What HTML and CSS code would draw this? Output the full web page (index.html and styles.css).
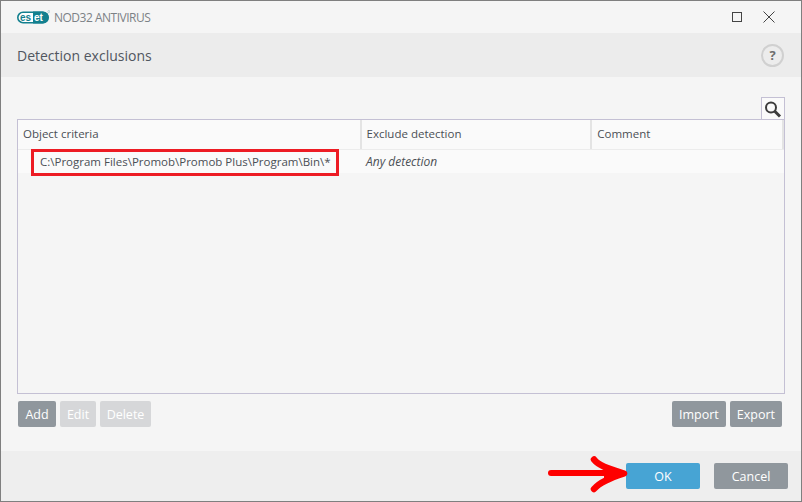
FILE: index.html
```html
<!DOCTYPE html>
<html lang="en">
<head>
<meta charset="utf-8">
<title>Detection exclusions</title>
<link rel="stylesheet" href="styles.css">
</head>
<body>
<div class="window">
  <div class="titlebar">
    <div class="brand">
      <svg class="logo" width="33" height="14" viewBox="0 0 33 14">
        <rect x="0.800" y="2.300" width="30" height="10.400" rx="5.200" fill="#fff" stroke="#13808f" stroke-width="1.600"/>
        <path d="M16 1.500h10a6 6 0 0 1 0 12H16z" fill="#13808f"/>
        <text x="3" y="10.700" class="logo-text logo-dark">es</text>
        <text x="17" y="10.700" class="logo-text logo-light">et</text>
        <circle cx="31.800" cy="1.500" r="1" fill="none" stroke="#7fb5bd" stroke-width=".5"/>
      </svg>
      <span class="product">NOD32 ANTIVIRUS</span>
    </div>
    <div class="winctl">
      <svg width="12" height="12" viewBox="0 0 12 12"><rect x="1.500" y="1.500" width="9" height="9" fill="none" stroke="#444"/></svg>
      <svg width="12" height="12" viewBox="0 0 12 12"><path d="M.5.500l11 11M11.500.500l-11 11" fill="none" stroke="#444"/></svg>
    </div>
  </div>
  <div class="header">
    <h1>Detection exclusions</h1>
    <span class="help">?</span>
  </div>
  <div class="content">
    <div class="search-row">
      <div class="search-tab">
        <svg width="18" height="18" viewBox="0 0 18 18"><circle cx="7" cy="7.500" r="5" fill="none" stroke="#3c3c3c" stroke-width="2"/><path d="M10.500 11l5.500 5.500" stroke="#3c3c3c" stroke-width="3" fill="none"/></svg>
      </div>
    </div>
    <div class="table">
      <div class="thead">
        <div class="th col1">Object criteria</div>
        <div class="th col2">Exclude detection</div>
        <div class="th col3">Comment</div>
      </div>
      <div class="row">
        <div class="td col1"><span class="path">C:\Program Files\Promob\Promob Plus\Program\Bin\*</span></div>
        <div class="td col2 italic">Any detection</div>
      </div>
    </div>
    <div class="actions">
      <div class="group">
        <button class="btn add">Add</button>
        <button class="btn off edit">Edit</button>
        <button class="btn off delete">Delete</button>
      </div>
      <div class="group">
        <button class="btn">Import</button>
        <button class="btn">Export</button>
      </div>
    </div>
  </div>
  <div class="footer">
    <svg class="arrow" width="84" height="38" viewBox="0 0 84 38"><path d="M7 18H66" fill="none" stroke="#fe0000" stroke-width="6" stroke-linecap="round"/><path d="M50 4.500C55 11 66 14 80 18.500C66 23 56 27 50 34" fill="none" stroke="#fe0000" stroke-width="6.500" stroke-linecap="round" stroke-linejoin="round"/><path d="M60 11L83 18.500L60 28z" fill="#fe0000"/></svg>
    <button class="btn wide ok">OK</button>
    <button class="btn wide">Cancel</button>
  </div>
</div>
</body>
</html>
```
FILE: styles.css
```css
* , *::before, *::after { box-sizing: border-box; }
html, body { margin: 0; padding: 0; }
body { width: 802px; height: 502px; overflow: hidden; font-family: "Open Sans", "Noto Sans", sans-serif; font-size: 11.500px; color: #4a4f55; }
.window { width: 802px; height: 502px; border: 1px solid #7f7f7f; display: flex; flex-direction: column; background: #f5f5f5; }
.titlebar { height: 32px; flex: none; display: flex; align-items: center; justify-content: space-between; padding: 0 26px 0 16px; }
.brand { display: flex; align-items: center; gap: 4px; }
.logo { display: block; }
.logo-text { font-family: "Liberation Sans", sans-serif; font-size: 10px; font-weight: 700; }
.logo-dark { fill: #13808f; }
.logo-light { fill: #fff; }
.product { font-size: 12px; color: #7c8186; letter-spacing: -.5px; }
.winctl { display: flex; gap: 20px; }
.winctl svg { display: block; }
.header { height: 44px; flex: none; background: #ececec; display: flex; align-items: center; justify-content: space-between; padding: 0 17px 0 16px; }
h1 { margin: 0; font-size: 14px; font-weight: 400; color: #505660; }
.help { width: 23px; height: 23px; border: 2px solid #d0d0d0; border-radius: 50%; display: flex; align-items: center; justify-content: center; font-size: 13px; font-weight: 700; color: #6e6e6e; }
.content { flex: 1; display: flex; flex-direction: column; padding: 20px 16px 0; }
.search-row { display: flex; justify-content: flex-end; height: 22px; flex: none; }
.search-tab { width: 24px; height: 22px; background: #fafafa; border: 1px solid #c4c0d4; border-bottom: 0; display: flex; align-items: center; justify-content: center; }
.table { height: 275px; flex: none; border: 1px solid #c4c0d4; }
.thead { height: 30px; display: flex; background: #fafafa; border-bottom: 1px solid #ececec; }
.th { display: flex; align-items: center; padding: 0 0 2px 5px; border-right: 2px solid #e4e4e4; }
.col1 { width: 344px; }
.col2 { width: 231px; }
.col3 { width: 192px; }
.row { height: 23px; display: flex; background: #fafafa; }
.td { display: flex; align-items: center; }
.row .col1 { position: relative; padding-left: 22px; }
.row .col2 { padding-left: 4px; font-size: 12px; }
.path::after { content: ""; position: absolute; left: 13px; top: -1px; width: 308px; height: 27px; border: 3px solid #ed1c24; }
.italic { font-style: italic; }
.actions { display: flex; justify-content: space-between; margin-top: 7px; padding: 0 3px 0 1px; }
.group { display: flex; gap: 4px; }
.btn { height: 26px; padding: 0 7px; border: 0; border-radius: 2px; background: #90979d; color: #fff; font: inherit; font-size: 12.500px; display: flex; align-items: center; justify-content: center; }
.off { background: #d6d7d9; }
.add { width: 38px; }
.edit { width: 36px; }
.delete { width: 51px; }
.footer { height: 50px; flex: none; margin-top: auto; background: #eeeeee; display: flex; align-items: center; justify-content: flex-end; gap: 14px; padding: 0 13px 0 0; position: relative; }
.wide { width: 74px; }
.ok { background: #47a4d4; }
.arrow { position: absolute; left: 543px; top: 4px; }
```
